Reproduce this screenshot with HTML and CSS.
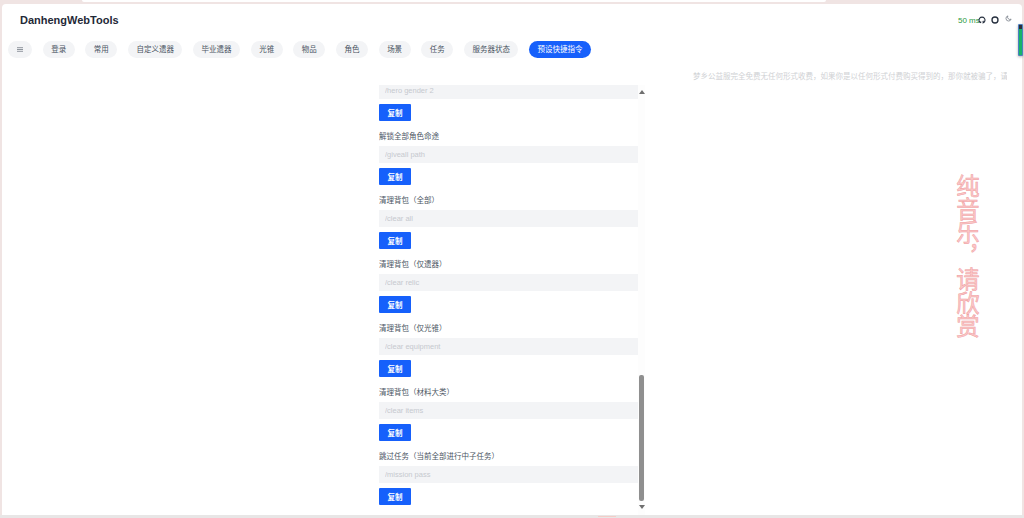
FILE: index.html
```html
<!DOCTYPE html>
<html lang="zh-CN">
<head>
<meta charset="utf-8">
<title>DanhengWebTools</title>
<link rel="stylesheet" href="styles.css">
</head>
<body>
<div class="top-strip"></div>
<main class="card">
  <header class="head">
    <h1 class="brand">DanhengWebTools</h1>
    <div class="status">
      <span class="ping">50 ms</span>
      <svg class="ico" viewBox="0 0 24 24" fill="none" stroke="#27303f" stroke-width="3.4"><path d="M8 21v-3c-3 .6-4-1-5-3M8.500 20.500A9 9 0 1 1 15.500 20.500V17c0-1-.3-1.700-1-2.300"/></svg>
      <svg class="ico" viewBox="0 0 24 24" fill="none" stroke="#27303f" stroke-width="4"><circle cx="12" cy="12" r="9"/></svg>
      <svg class="ico moon" viewBox="0 0 24 24" fill="none" stroke="#4b5563" stroke-width="2"><path d="M10 3a9 9 0 1 0 11 11A8 8 0 0 1 10 3z"/></svg>
    </div>
  </header>
  <nav class="tabs">
    <button class="tab">
      <svg class="menu" viewBox="0 0 10 8" fill="none" stroke="#4b5563" stroke-width="1"><path d="M0 1h10M0 4h10M0 7h10"/></svg>
    </button>
    <button class="tab">登录</button>
    <button class="tab">常用</button>
    <button class="tab">自定义遗器</button>
    <button class="tab">毕业遗器</button>
    <button class="tab">光锥</button>
    <button class="tab">物品</button>
    <button class="tab">角色</button>
    <button class="tab">场景</button>
    <button class="tab">任务</button>
    <button class="tab">服务器状态</button>
    <button class="tab active">预设快捷指令</button>
  </nav>
  <p class="notice"><span>梦乡公益服完全免费无任何形式收费，如果你是以任何形式付费购买得到的，那你就被骗了，请</span></p>
  <section class="panel">
    <div class="list">
      <div class="item"><input class="cmd" placeholder="/hero gender 2" readonly><button class="copy">复制</button></div>
      <div class="item"><label class="name">解锁全部角色命途</label><input class="cmd" placeholder="/giveall path" readonly><button class="copy">复制</button></div>
      <div class="item"><label class="name">清理背包（全部）</label><input class="cmd" placeholder="/clear all" readonly><button class="copy">复制</button></div>
      <div class="item"><label class="name">清理背包（仅遗器）</label><input class="cmd" placeholder="/clear relic" readonly><button class="copy">复制</button></div>
      <div class="item"><label class="name">清理背包（仅光锥）</label><input class="cmd" placeholder="/clear equipment" readonly><button class="copy">复制</button></div>
      <div class="item"><label class="name">清理背包（材料大类）</label><input class="cmd" placeholder="/clear items" readonly><button class="copy">复制</button></div>
      <div class="item"><label class="name">跳过任务（当前全部进行中子任务）</label><input class="cmd" placeholder="/mission pass" readonly><button class="copy">复制</button></div>
    </div>
    <div class="scrollbar">
      <span class="arrow up"></span>
      <span class="thumb"></span>
      <span class="arrow down"></span>
    </div>
  </section>
</main>
<footer class="dock"><span class="dock-mark"></span></footer>
<div class="lyric">纯音乐，请欣赏</div>
<div class="volume"><span class="volume-fill"></span></div>
</body>
</html>
```
FILE: styles.css
```css
* { box-sizing: border-box; }
html, body { margin: 0; height: 518px; overflow: hidden; }
body {
  background: #f0e4e3;
  font-family: "Liberation Sans", "Noto Sans CJK SC", sans-serif;
  padding: 4px 2px 0;
  position: relative;
}
.top-strip {
  position: absolute;
  left: 82px;
  top: 0;
  width: 744px;
  height: 2px;
  background: #fff;
  border-radius: 0 0 4px 4px;
}
.card {
  height: 511px;
  background: #fff;
  border-radius: 4px 4px 0 0;
  display: flex;
  flex-direction: column;
  overflow: hidden;
}
.dock {
  height: 3px;
  margin: 0 -2px;
  padding: 1px 0 0 598px;
  background: #e8e6e6;
}
.dock-mark {
  display: block;
  width: 18px;
  height: 1px;
  background: #f3cdc8;
}
.head {
  height: 31px;
  display: flex;
  align-items: center;
  justify-content: space-between;
  padding: 1px 10px 0 18px;
}
.brand {
  margin: 0;
  font-size: 11px;
  font-weight: 700;
  color: #1f2937;
}
.status { display: flex; align-items: center; }
.ping { font-size: 8px; color: #2b9a3e; width: 20px; white-space: nowrap; }
.ico { width: 8px; height: 8px; margin-left: 5px; }
.ico:first-of-type { margin-left: 0; }
.ico.moon { width: 7px; height: 7px; margin-top: -3px; margin-left: 6px; }
.tabs {
  display: flex;
  gap: 10.65px;
  padding: 6px 0 0 6px;
}
.tab {
  height: 17px;
  padding: 0 8.5px;
  border: 0;
  border-radius: 9px;
  background: #f3f4f6;
  color: #4b5563;
  font-family: inherit;
  font-size: 7.5px;
  line-height: 17px;
  white-space: nowrap;
}
.tab.active { background: #1660fb; color: #fff; }
.menu { display: block; width: 6px; height: 5px; margin: 0 auto; }
.tab:first-child { width: 24px; padding: 0; }
.notice {
  margin: 14px 0 0;
  height: 10px;
  padding-left: 691px;
  width: 1005px;
  overflow: hidden;
  white-space: nowrap;
  font-size: 7.5px;
  line-height: 10px;
  color: #cfd1d4;
}
.panel {
  flex: 1;
  min-height: 0;
  margin: 3px 0 0 363px;
  width: 280px;
  padding-left: 14px;
  display: flex;
  background: #fff;
}
.list {
  width: 259px;
  height: 100%;
  display: flex;
  flex-direction: column;
  justify-content: flex-end;
  overflow: hidden;
  padding-bottom: 10px;
}
.item {
  flex: none;
  display: flex;
  flex-direction: column;
  align-items: flex-start;
  height: 64px;
}
.item:first-child { height: 44px; }
.item:last-child { height: 59px; }
.name {
  height: 20px;
  line-height: 9px;
  padding-top: 6px;
  font-size: 7.5px;
  color: #4b5563;
}
.cmd {
  flex: none;
  width: 259px;
  height: 17px;
  border: 0;
  background: #f3f4f6;
  padding: 0 6px;
  font-family: inherit;
  font-size: 7.5px;
  outline: 0;
}
.cmd::placeholder { color: #c6c9cf; opacity: 1; }
.copy {
  flex: none;
  width: 32px;
  height: 17px;
  margin-top: 5px;
  padding: 0;
  border: 0;
  border-radius: 1px;
  background: #1660fb;
  color: #fff;
  font-family: inherit;
  font-size: 7.5px;
  font-weight: 700;
}
.scrollbar {
  width: 7px;
  display: flex;
  flex-direction: column;
  align-items: center;
  background: #fdfdfd;
  padding: 5px 0 6px;
}
.arrow {
  flex: none;
  width: 0;
  height: 0;
  border-left: 3px solid transparent;
  border-right: 3px solid transparent;
}
.arrow.up { border-bottom: 4px solid #6f6f6f; }
.arrow.down { border-top: 4px solid #6f6f6f; margin-top: 4px; }
.thumb {
  flex: none;
  width: 5px;
  height: 126px;
  margin-top: auto;
  background: #8f8f8f;
  border-radius: 2px;
}
.lyric {
  position: absolute;
  left: 956px;
  top: 174px;
  writing-mode: vertical-rl;
  font-family: "Noto Sans CJK SC", sans-serif;
  font-size: 23.4px;
  line-height: 24px;
  color: #fcc8c8;
  -webkit-text-stroke: 0.5px #ee9ca0;
  white-space: nowrap;
}
.volume {
  position: absolute;
  left: 1018px;
  top: 24px;
  width: 5px;
  height: 32px;
  border: 1px solid #4a7fc0;
  border-radius: 1px;
  background: #2d2f38;
  padding-top: 4px;
  box-shadow: 0 1px 3px rgba(0,0,0,.3);
}
.volume-fill { display: block; height: 100%; background: #17b468; }
```
